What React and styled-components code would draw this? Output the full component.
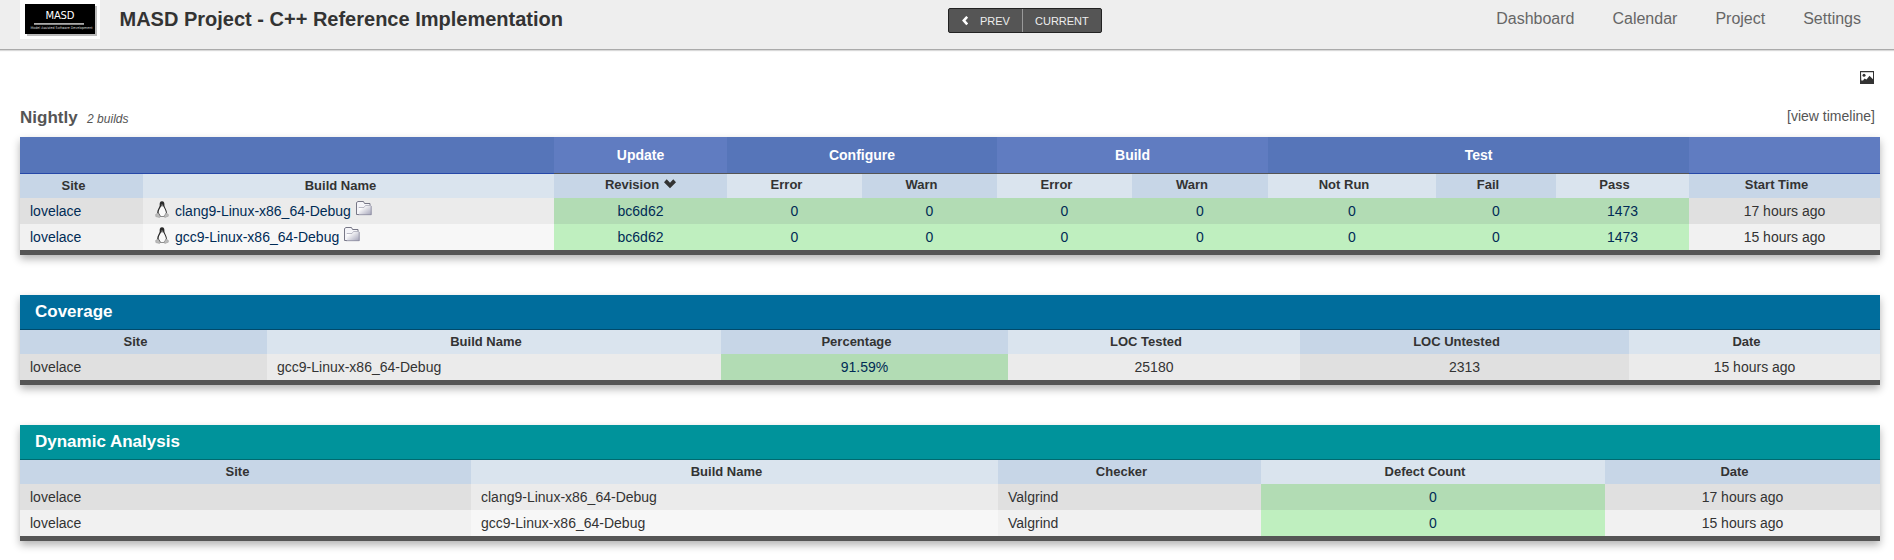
import React from "react";
import styled, { createGlobalStyle } from "styled-components";

const Global = createGlobalStyle`
  * { box-sizing: border-box; }
  html, body { margin: 0; padding: 0; background: #fff; overflow: hidden; }
  body { font: 14px "Liberation Sans", Arial, sans-serif; color: #333; }
`;

const Page = styled.div`
  width: 1894px;
  height: 560px;
  overflow: hidden;
`;

const Header = styled.header`
  display: grid;
  grid-template-columns: 928px 154px 1fr;
  height: 50px;
  padding: 0 33px 0 20px;
  background: #eee;
  border-bottom: 1px solid #aaa;
  box-shadow: 0 1px 1px rgba(0, 0, 0, 0.15);
`;

const Brand = styled.div`
  display: flex;
  gap: 19.5px;
`;

const LogoFrame = styled.div`
  width: 80px;
  height: 39px;
  padding: 4px 5px;
  background: #fff;
`;

const Logo = styled.svg`
  display: block;
`;

const Title = styled.h1`
  margin: 0;
  padding-top: 7px;
  font-size: 20px;
  line-height: 24px;
  font-weight: bold;
`;

const Pager = styled.div`
  display: flex;
  height: 25px;
  margin-top: 8px;
  background: #555;
  border: 1px solid #222;
  border-radius: 2px;
  color: #eee;
  font-size: 11px;
  line-height: 24px;
`;

const PagerItem = styled.a`
  display: flex;
  align-items: center;
  width: ${(p) => p.$width}px;
  padding-left: ${(p) => p.$pad}px;
  border-right: ${(p) => (p.$divided ? "1px solid #999" : "0")};
  gap: 12px;
`;

const PagerText = styled.span`
  height: 23px;
`;

const Nav = styled.nav`
  display: flex;
  justify-content: flex-end;
  gap: 38px;
  padding-top: 9px;
  color: #666;
  font-size: 16px;
  line-height: 20px;
`;

const Main = styled.main`
  padding: 0 14px 0 20px;
`;

const Tools = styled.div`
  display: flex;
  justify-content: flex-end;
  height: 55px;
  padding: 21px 6px 0 0;
`;

const GroupBar = styled.div`
  display: flex;
  align-items: baseline;
  height: 32px;
  padding-right: 5px;
  color: #555;
`;

const GroupName = styled.h3`
  margin: 0 9.5px 0 0;
  font-size: 17px;
  line-height: 25px;
`;

const BuildCount = styled.em`
  font-size: 12px;
`;

const Timeline = styled.a`
  margin-left: auto;
  padding-bottom: 2px;
  transform: translateY(-2px);
`;

const Panel = styled.table`
  width: 1860px;
  margin-bottom: 40px;
  table-layout: fixed;
  border-collapse: separate;
  border-spacing: 0;
  border-bottom: 5px solid #555;
  box-shadow: 0 4px 8px rgba(0, 0, 0, 0.3);
`;

const GroupHead = styled.th`
  height: 37px;
  padding: 0;
  color: #fff;
  font-size: 14px;
  background: ${(p) => (p.$light ? "#607cc1" : "#5675b9")};
  border-bottom: 1px solid ${(p) => (p.$blank ? "#2648a8" : "#555")};
`;

const PanelTitle = styled.th`
  height: 35px;
  padding: 0 0 0 15px;
  text-align: left;
  font-size: 17px;
  color: #fff;
  background: ${(p) => p.$bg};
  border-bottom: 1px solid ${(p) => p.$line};
`;

const ColHead = styled.th`
  height: 24px;
  padding: 0 16px 1px 0;
  font-size: 13px;
  line-height: 15px;
  background: #dae4ee;
  &:nth-child(odd) { background: #c7d6e7; }
`;

const BuildsColHead = styled(ColHead)`
  padding: 0 ${(p) => (p.$sorted ? 0 : 16)}px ${(p) => (p.$low ? 1 : 3)}px 0;
  &:nth-child(n) { background: ${(p) => (p.$dark ? "#c7d6e7" : "#dae4ee")}; }
`;

const Cell = styled.td`
  height: 26px;
  padding: 0 0 0 ${(p) => (p.$left ? 10 : 0)}px;
  text-align: ${(p) => (p.$left ? "left" : "center")};
  line-height: 16px;
  white-space: nowrap;
  color: ${(p) => (p.$link ? "#002b55" : "#333")};
  background: ${(p) =>
    p.$ok
      ? p.$alt ? "#bfefbf" : "#b2dcb4"
      : p.$odd
        ? p.$alt ? "#f1f1f1" : "#e0e0e0"
        : p.$alt ? "#f7f7f7" : "#ebebeb"};
`;

const Build = styled.div`
  display: flex;
  align-items: center;
  padding-left: 2px;
  height: 26px;
`;

const BuildLink = styled.a`
  margin: 0 5px 0 6px;
`;

const SortIcon = styled.svg`
  margin-left: 5px;
`;

const IconSlot = styled.span`
  display: block;
  height: 21px;
`;

const MasdLogo = () => (
  <Logo width="74" height="34" viewBox="0 0 74 34">
    <rect x="2" y="2" width="70" height="30" fill="#bbb" />
    <rect width="70" height="30" fill="#000" />
    <text x="35" y="15" textAnchor="middle" fontFamily="DejaVu Sans" fontSize="10" fill="#fff" textLength="29">MASD</text>
    <rect x="9" y="19" width="50" height="1.800" fill="#aaa" />
    <text x="36.500" y="25" textAnchor="middle" fontFamily="DejaVu Sans" fontSize="3.6" fill="#ddd" textLength="62" lengthAdjust="spacingAndGlyphs">Model Assisted Software Development</text>
  </Logo>
);

const ChevronLeft = () => (
  <svg width="6" height="10" viewBox="0 0 6 10">
    <path d="M5.200 .8 1.800 4.600 5.200 8.400" fill="none" stroke="#fff" strokeWidth="2.600" />
  </svg>
);

const PictureIcon = () => (
  <svg width="14" height="13" viewBox="0 0 14 13">
    <path d="M0 0h14v13H0z" fill="#333" />
    <path d="M1 1.200h12v7L9.500 4.800 6.500 8.500 4.500 7.500 3 9.500 1.300 9.500z" fill="#fff" />
    <circle cx="4" cy="4.200" r="1.500" fill="#333" />
  </svg>
);

const Penguin = () => (
  <svg width="14" height="17" viewBox="0 0 14 17">
    <path d="M7 .3C4.900 .3 4.500 2 4.700 4.500 4.700 6 2.300 8.500 2.100 12l2.400 3.500h5L12 12C11.800 8.500 9.600 6.500 9.400 4.500 9.600 2 9.100 .3 7 .3z" fill="#2a2a2a" />
    <path d="M6.200 5.200C5 7 3.700 9 3.600 11.500L5.600 15h3.600l1.800-3C10.700 9 9.200 7 8.300 5.200z" fill="#fafafa" />
    <path d="M.6 13.500 3 11.800l2.300 3.400-.8 1.400L.8 15.500zM13.400 13.500l-2.200-1.700-2 3 .6 1.800 3.500-1.400z" fill="#bbb" stroke="#888" strokeWidth=".4" />
    <path d="M6 3.800 7.300 3.500 8.300 4.200 7 5z" fill="#aaa" />
  </svg>
);

const Folder = () => (
  <svg width="16" height="15" viewBox="0 0 16 15">
    <defs>
      <linearGradient id="folderFill" x1="0" y1="0" x2="1" y2="1">
        <stop offset=".2" stopColor="#fff" />
        <stop offset="1" stopColor="#a0a0b6" />
      </linearGradient>
    </defs>
    <path d="M.5 13.500V1.500L2 .5h5.500L8.500 2.500h6v11z" fill="#f4f4f8" />
    <path d="M.5 13.500V1.500L2 .5h5.500L8.500 2.500h5.500v2M.5 13.500H3" fill="none" stroke="#777786" />
    <path d="M3 14V6.500H8L9.500 4.500h6V14z" fill="url(#folderFill)" />
    <path d="M3 7V6.500H8L9.500 4.500H15" fill="none" stroke="#aaaab8" strokeWidth=".8" />
    <path d="M2 13.700h13.200V5" fill="none" stroke="#8c8c9e" strokeWidth=".8" />
  </svg>
);

const Columns = ({ widths }) => (
  <colgroup>{widths.map((w, i) => <col key={i} width={w} />)}</colgroup>
);

const BUILDS = [
  { name: "clang9-Linux-x86_64-Debug", time: "17 hours ago" },
  { name: "gcc9-Linux-x86_64-Debug", time: "15 hours ago" },
];

const BuildsTable = () => (
  <Panel>
    <Columns widths={[123, 411, 173, 135, 135, 135, 136, 168, 120, 133, 191]} />
    <thead>
      <tr>
        <GroupHead colSpan={2} $blank />
        <GroupHead $light>Update</GroupHead>
        <GroupHead colSpan={2}>Configure</GroupHead>
        <GroupHead colSpan={2} $light>Build</GroupHead>
        <GroupHead colSpan={3}>Test</GroupHead>
        <GroupHead $light $blank />
      </tr>
      <tr>
        <BuildsColHead $dark $low>Site</BuildsColHead>
        <BuildsColHead $low>Build Name</BuildsColHead>
        <BuildsColHead $dark $sorted>
          Revision
          <SortIcon width="12" height="10" viewBox="0 0 12 10">
            <path d="M0 3.200 2.700 .3 6 3.700 9.300 .3 12 3.200 6 9.300z" fill="#333" />
          </SortIcon>
        </BuildsColHead>
        {["Error", "Warn", "Error", "Warn", "Not Run", "Fail", "Pass", "Start Time"].map((t, i) => (
          <BuildsColHead key={i} $dark={i % 2 === 1}>{t}</BuildsColHead>
        ))}
      </tr>
    </thead>
    <tbody>
      {BUILDS.map((b, r) => (
        <tr key={b.name}>
          <Cell $left $odd $link $alt={r}>lovelace</Cell>
          <Cell $left $link $alt={r}>
            <Build>
              <IconSlot><Penguin /></IconSlot>
              <BuildLink>{b.name}</BuildLink>
              <IconSlot><Folder /></IconSlot>
            </Build>
          </Cell>
          {["bc6d62", 0, 0, 0, 0, 0, 0, 1473].map((v, i) => (
            <Cell key={i} $ok $link $alt={r}>{v}</Cell>
          ))}
          <Cell $odd $alt={r}>{b.time}</Cell>
        </tr>
      ))}
    </tbody>
  </Panel>
);

const SummaryTable = ({ title, bg, line, widths, heads, rows, leftCols, okCol }) => (
  <Panel>
    <Columns widths={widths} />
    <thead>
      <tr><PanelTitle colSpan={heads.length} $bg={bg} $line={line}>{title}</PanelTitle></tr>
      <tr>{heads.map((h) => <ColHead key={h}>{h}</ColHead>)}</tr>
    </thead>
    <tbody>
      {rows.map((row, r) => (
        <tr key={r}>
          {row.map((v, i) => (
            <Cell key={i} $left={i < leftCols} $ok={i === okCol} $link={i === okCol} $odd={i % 2 === 0} $alt={r}>{v}</Cell>
          ))}
        </tr>
      ))}
    </tbody>
  </Panel>
);

export default function App() {
  return (
    <Page>
      <Global />
      <Header>
        <Brand>
          <LogoFrame><MasdLogo /></LogoFrame>
          <Title>MASD Project - C++ Reference Implementation</Title>
        </Brand>
        <Pager>
          <PagerItem $width={74} $pad={13} $divided><ChevronLeft /><PagerText>PREV</PagerText></PagerItem>
          <PagerItem $width={78} $pad={12}><PagerText>CURRENT</PagerText></PagerItem>
        </Pager>
        <Nav><a>Dashboard</a><a>Calendar</a><a>Project</a><a>Settings</a></Nav>
      </Header>
      <Main>
        <Tools><PictureIcon /></Tools>
        <GroupBar>
          <GroupName>Nightly</GroupName>
          <BuildCount>2 builds</BuildCount>
          <Timeline>[view timeline]</Timeline>
        </GroupBar>
        <BuildsTable />
        <SummaryTable
          title="Coverage" bg="#006d9c" line="#004a6b"
          widths={[247, 454, 287, 292, 329, 251]}
          heads={["Site", "Build Name", "Percentage", "LOC Tested", "LOC Untested", "Date"]}
          rows={[["lovelace", "gcc9-Linux-x86_64-Debug", "91.59%", "25180", "2313", "15 hours ago"]]}
          leftCols={2} okCol={2}
        />
        <SummaryTable
          title="Dynamic Analysis" bg="#00939b" line="#006a70"
          widths={[451, 527, 263, 344, 275]}
          heads={["Site", "Build Name", "Checker", "Defect Count", "Date"]}
          rows={[
            ["lovelace", "clang9-Linux-x86_64-Debug", "Valgrind", "0", "17 hours ago"],
            ["lovelace", "gcc9-Linux-x86_64-Debug", "Valgrind", "0", "15 hours ago"],
          ]}
          leftCols={3} okCol={3}
        />
      </Main>
    </Page>
  );
}
